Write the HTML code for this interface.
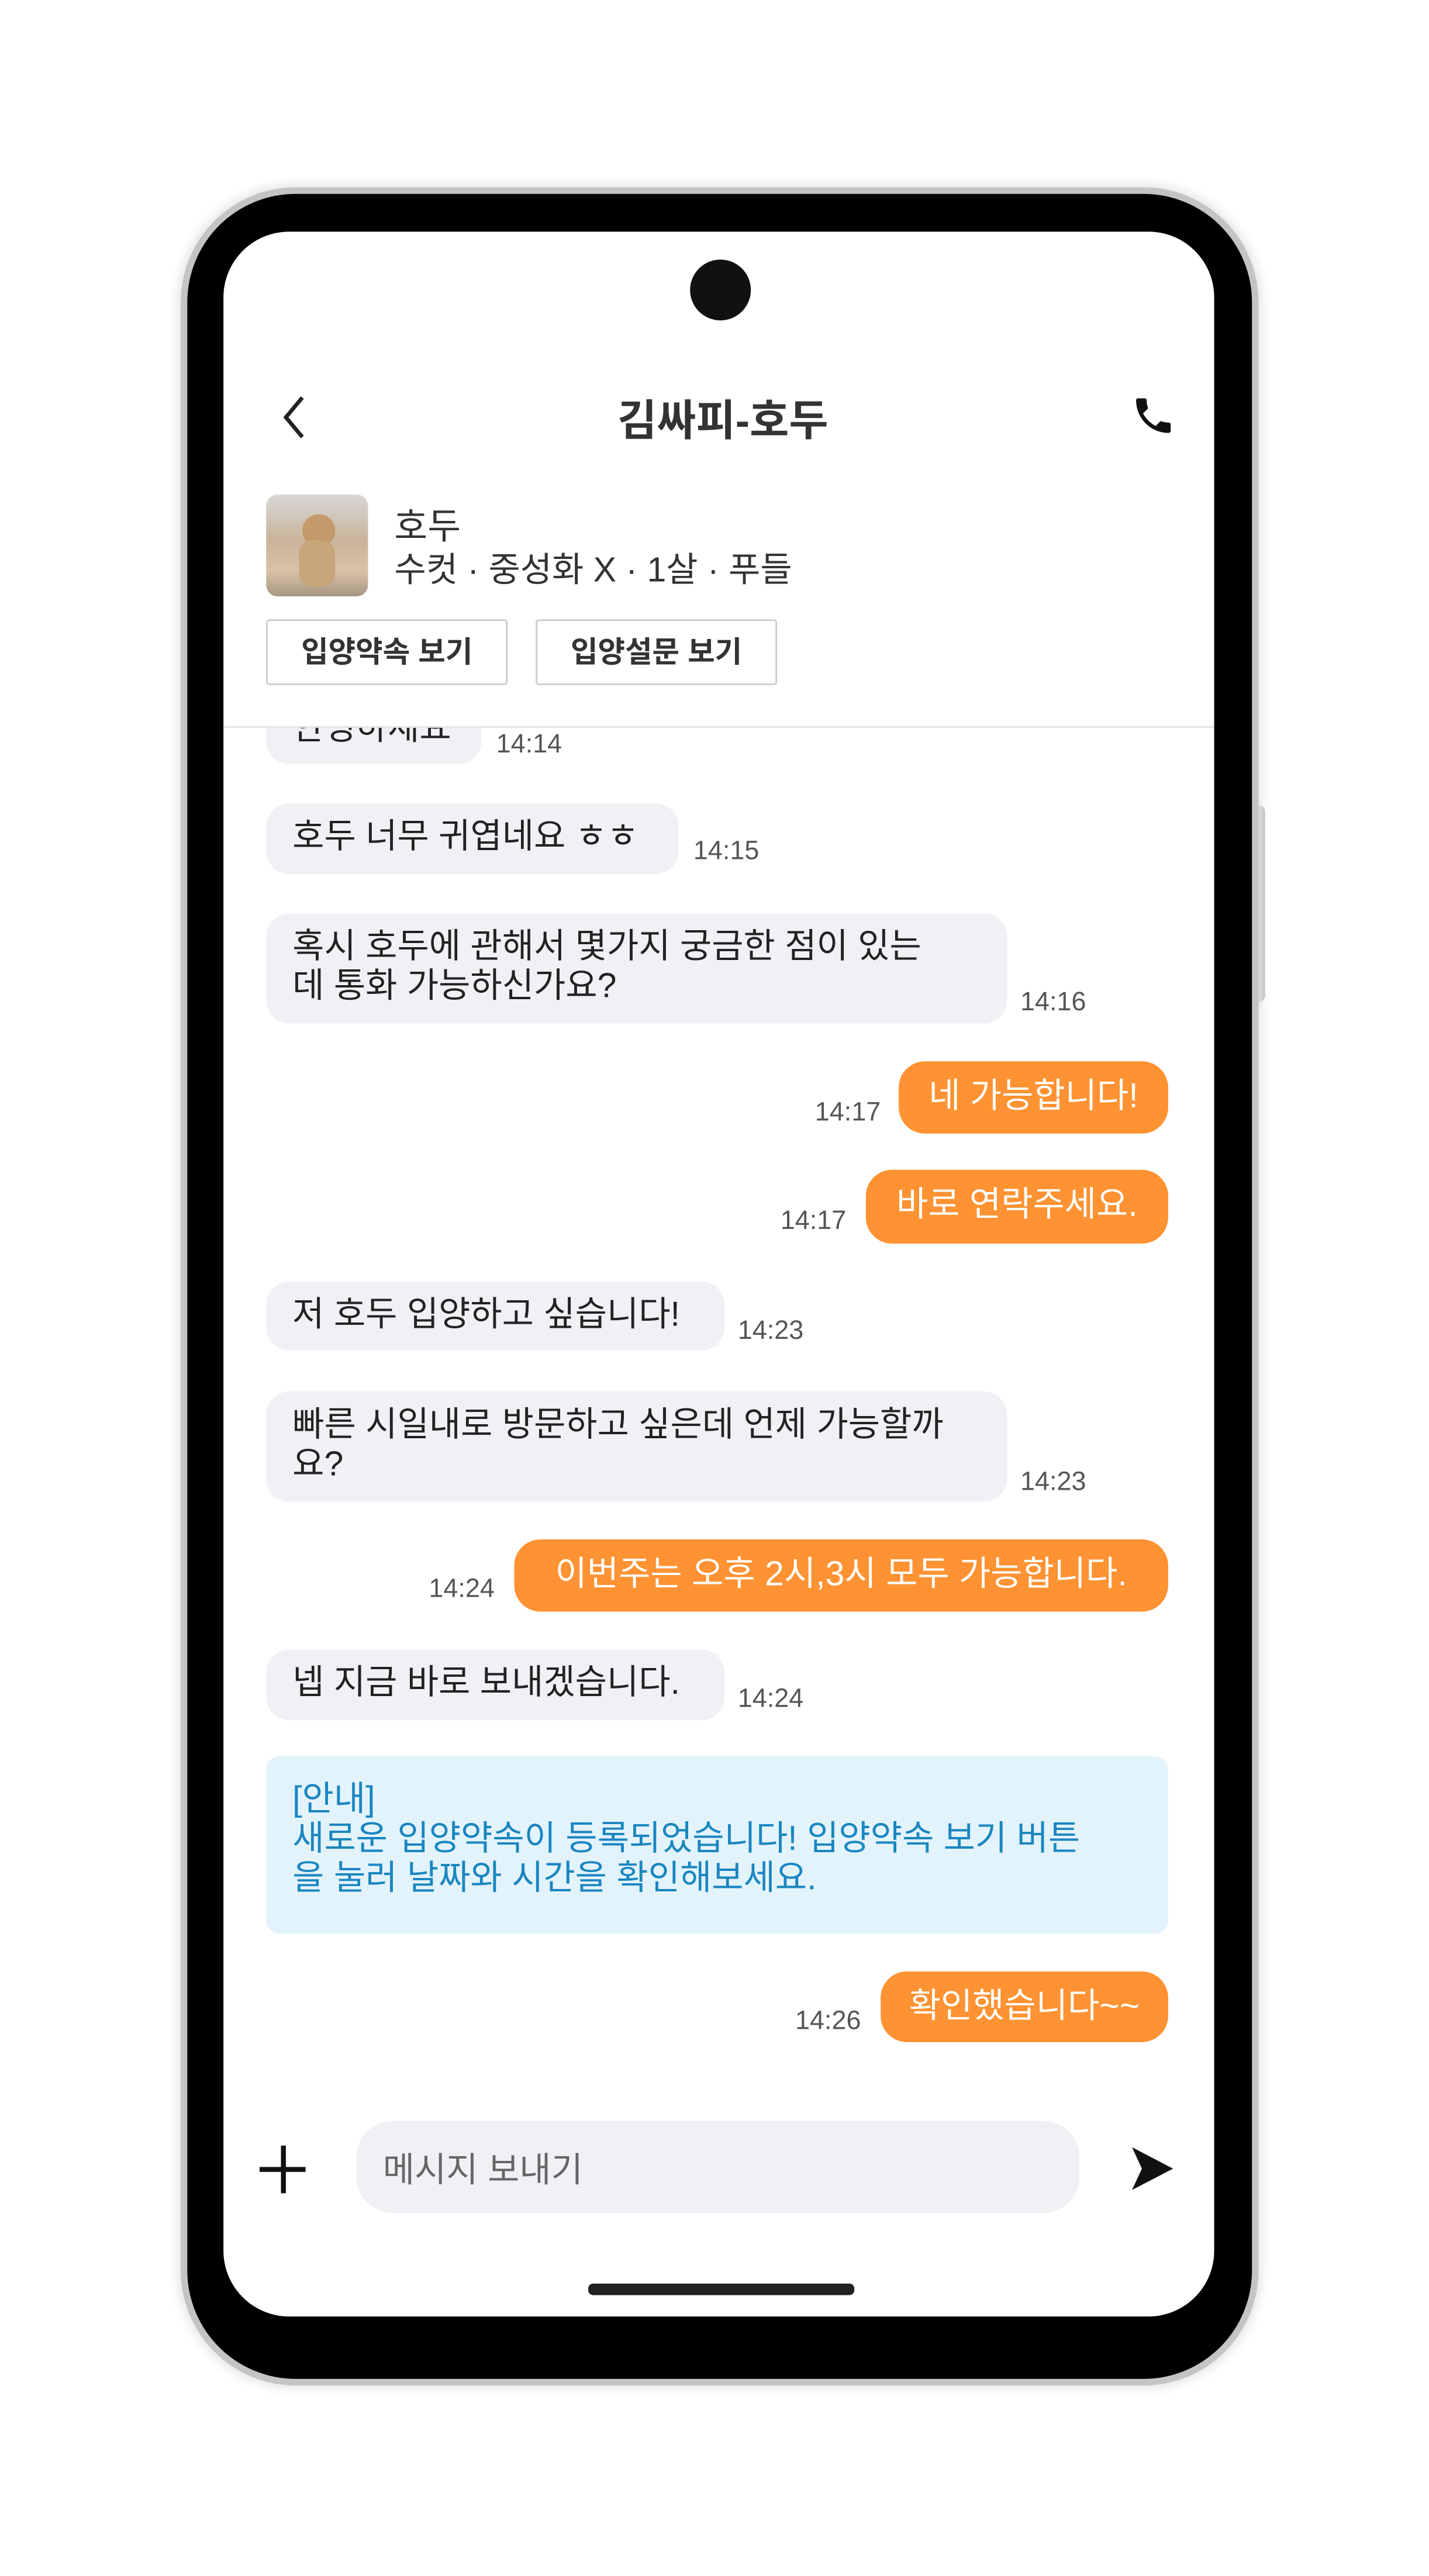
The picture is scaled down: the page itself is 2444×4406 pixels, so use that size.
<!DOCTYPE html>
<html><head><meta charset="utf-8">
<style>
html,body{margin:0;padding:0;background:#fff;width:2444px;height:4404px;overflow:hidden}
#w{position:absolute;left:0;top:0;width:870px;height:1568px;transform:scale(2.81);transform-origin:0 0;font-family:"Liberation Sans","Noto Sans CJK KR",sans-serif;color:#222}
.a{position:absolute}
.frame{left:114px;top:118px;width:648px;height:1330px;border-radius:66px;background:#000;box-shadow:0 0 0 4px #c4c4c4,0 0 6px 6px #e6e6e6}
.screen{left:136px;top:141px;width:603px;height:1269px;border-radius:40px;background:#fff;overflow:hidden}
.bl{position:absolute;background:#f0f1f5;border-radius:14px;font-size:21px;line-height:24px;padding:9px 16px;box-sizing:border-box;color:#222;white-space:nowrap}
.br{position:absolute;background:#ff9232;border-radius:16px;font-size:21px;line-height:24px;padding:10px 16px;box-sizing:border-box;color:#fff;white-space:nowrap;text-align:center}
.t{position:absolute;font-size:16px;color:#555;line-height:18px}
.btn{position:absolute;top:377px;height:40px;border:1px solid #ccc;border-radius:2px;box-sizing:border-box;font-size:18px;font-weight:bold;color:#333;text-align:center;line-height:38px;background:#fff}
</style></head><body><div id="w">
<div class="a" style="left:762px;top:490px;width:8px;height:120px;background:#bbb;border-radius:4px"></div>
<div class="a frame"></div>
<div class="a screen"></div>
<div class="a" style="left:420px;top:158px;width:37px;height:37px;border-radius:50%;background:#111"></div>
<!-- header -->
<svg class="a" style="left:168px;top:240px" width="22" height="28" viewBox="0 0 22 28"><path d="M16 2 L6 14 L16 26" fill="none" stroke="#222" stroke-width="2.4"/></svg>
<div class="a" style="left:340px;width:200px;top:236px;text-align:center;font-size:26px;font-weight:bold;color:#333">김싸피-호두</div>
<svg class="a" style="left:688px;top:239px" width="28" height="28" viewBox="0 0 24 24"><path d="M6.6 10.8c1.4 2.8 3.8 5.1 6.6 6.6l2.2-2.2c.3-.3.7-.4 1-.2 1.1.4 2.3.6 3.6.6.6 0 1 .4 1 1V20c0 .6-.4 1-1 1C10.6 21 3 13.4 3 4c0-.6.4-1 1-1h3.5c.6 0 1 .4 1 1 0 1.3.2 2.5.6 3.6.1.3 0 .7-.2 1z" fill="#111"/></svg>
<!-- profile -->
<div class="a" style="left:162px;top:301px;width:62px;height:62px;border-radius:7px;background:linear-gradient(180deg,#d8d8d6 0%,#c9b49a 45%,#d7c2a8 75%,#a89680 100%);overflow:hidden">
<div class="a" style="left:22px;top:12px;width:20px;height:20px;border-radius:50%;background:#c49a6c"></div>
<div class="a" style="left:20px;top:28px;width:22px;height:28px;border-radius:8px;background:#c8a47a"></div>
</div>
<div class="a" style="left:240px;top:303px;font-size:22px;color:#333">호두</div>
<div class="a" style="left:240px;top:331px;font-size:21px;color:#333">수컷 · 중성화 X · 1살 · 푸들</div>
<div class="btn" style="left:162px;width:147px">입양약속 보기</div>
<div class="btn" style="left:326px;width:147px">입양설문 보기</div>
<div class="a" style="left:136px;top:442px;width:603px;height:1px;background:#e4e4e4"></div>
<!-- messages -->
<div style="position:absolute;left:136px;top:443px;width:603px;height:40px;overflow:hidden">
<div class="bl" style="left:26px;top:-20px;width:131px;height:42px">안녕하세요</div>
<div class="t" style="left:166px;top:2px">14:14</div>
</div>
<div class="bl" style="left:162px;top:489px;width:251px;height:43px">호두 너무 귀엽네요 ㅎㅎ</div>
<div class="t" style="left:422px;top:510px">14:15</div>
<div class="bl" style="left:162px;top:556px;width:451px;height:67px">혹시 호두에 관해서 몇가지 궁금한 점이 있는<br>데 통화 가능하신가요?</div>
<div class="t" style="left:621px;top:602px">14:16</div>
<div class="br" style="left:547px;top:646px;width:164px;height:44px">네 가능합니다!</div>
<div class="t" style="left:496px;top:669px">14:17</div>
<div class="br" style="left:527px;top:712px;width:184px;height:45px">바로 연락주세요.</div>
<div class="t" style="left:475px;top:735px">14:17</div>
<div class="bl" style="left:162px;top:780px;width:279px;height:42px">저 호두 입양하고 싶습니다!</div>
<div class="t" style="left:449px;top:802px">14:23</div>
<div class="bl" style="left:162px;top:847px;width:451px;height:67px">빠른 시일내로 방문하고 싶은데 언제 가능할까<br>요?</div>
<div class="t" style="left:621px;top:894px">14:23</div>
<div class="br" style="left:313px;top:937px;width:398px;height:44px">이번주는 오후 2시,3시 모두 가능합니다.</div>
<div class="t" style="left:261px;top:959px">14:24</div>
<div class="bl" style="left:162px;top:1004px;width:279px;height:43px">넵 지금 바로 보내겠습니다.</div>
<div class="t" style="left:449px;top:1026px">14:24</div>
<div class="a" style="left:162px;top:1069px;width:549px;height:108px;background:#e3f3fc;border-radius:8px;padding:15px 16px;box-sizing:border-box;color:#1a86c0;font-size:21px;line-height:24px;white-space:nowrap">[안내]<br>새로운 입양약속이 등록되었습니다! 입양약속 보기 버튼<br>을 눌러 날짜와 시간을 확인해보세요.</div>
<div class="br" style="left:536px;top:1200px;width:175px;height:43px">확인했습니다~~</div>
<div class="t" style="left:484px;top:1222px">14:26</div>
<!-- input -->
<div class="a" style="left:158px;top:1319px;width:28px;height:3px;background:#111"></div>
<div class="a" style="left:170.5px;top:1306px;width:3px;height:29px;background:#111"></div>
<div class="a" style="left:217px;top:1291px;width:440px;height:56px;border-radius:22px;background:#f0f1f5"></div>
<div class="a" style="left:233px;top:1305px;font-size:21px;color:#666">메시지 보내기</div>
<svg class="a" style="left:686px;top:1305px" width="30" height="30" viewBox="0 0 30 30"><path d="M3 2 L28 15 L3 28 L9 15 Z" fill="#111"/></svg>
<div class="a" style="left:358px;top:1390px;width:162px;height:7px;border-radius:3px;background:#222"></div>
</div></body></html>
